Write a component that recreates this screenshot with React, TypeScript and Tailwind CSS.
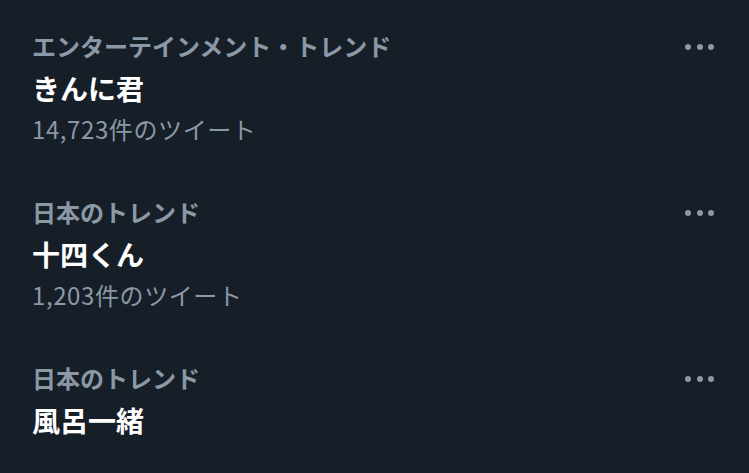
import React from "react";

const items = [
  { label: "エンターテインメント・トレンド", title: "きんに君", count: "14,723件のツイート" },
  { label: "日本のトレンド", title: "十四くん", count: "1,203件のツイート" },
  { label: "日本のトレンド", title: "風呂一緒", count: null },
];

function Dots() {
  return (
    <div className="flex items-center gap-[5.5px] pt-[13px]">
      <span className="block w-[6px] h-[6px] rounded-full bg-[#8b98a5]" />
      <span className="block w-[6px] h-[6px] rounded-full bg-[#8b98a5]" />
      <span className="block w-[6px] h-[6px] rounded-full bg-[#8b98a5]" />
    </div>
  );
}

export default function App() {
  return (
    <div
      className="w-[749px] h-[473px] bg-[#161e28] overflow-hidden"
      style={{ fontFamily: '"Noto Sans CJK JP", "Noto Sans", sans-serif' }}
    >
      <div className="flex flex-col gap-[53px] pt-[31px] pl-[32px] pr-[35px]">
        {items.map((it, i) => (
          <div key={i} className="flex items-start justify-between">
            <div className="flex flex-col">
              <div className="text-[24px] leading-[30px] font-bold text-[#8b98a5]">{it.label}</div>
              <div className="mt-[9px] text-[28px] leading-[36px] font-bold text-white">{it.title}</div>
              {it.count && (
                <div className="mt-[8px] text-[24px] leading-[30px] tracking-[0.6px] text-[#8b98a5]">{it.count}</div>
              )}
            </div>
            <Dots />
          </div>
        ))}
      </div>
    </div>
  );
}
